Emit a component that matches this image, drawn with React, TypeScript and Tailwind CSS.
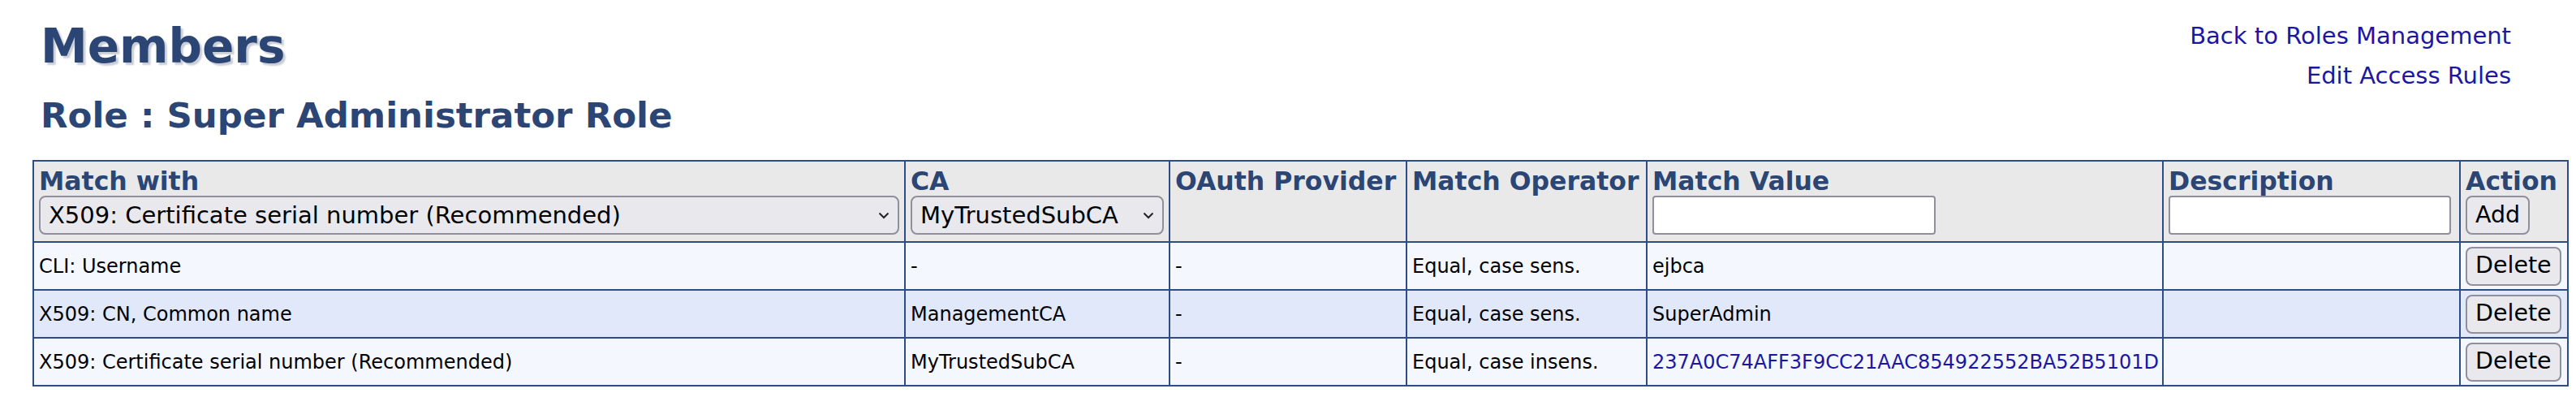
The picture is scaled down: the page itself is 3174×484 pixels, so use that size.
const rows = [
  { match: "CLI: Username", ca: "-", oauth: "-", op: "Equal, case sens.", value: "ejbca", link: false },
  { match: "X509: CN, Common name", ca: "ManagementCA", oauth: "-", op: "Equal, case sens.", value: "SuperAdmin", link: false },
  {
    match: "X509: Certificate serial number (Recommended)",
    ca: "MyTrustedSubCA",
    oauth: "-",
    op: "Equal, case insens.",
    value: "237A0C74AFF3F9CC21AAC854922552BA52B5101D",
    link: true,
  },
];

function Select({ value }: { value: string }) {
  return (
    <div className="relative w-full">
      <select
        defaultValue={value}
        className="w-full h-[48px] appearance-none bg-[#e9e9ed] border-2 border-[#8f8f9d] rounded-[8px] pl-[10px] pr-[36px] text-[29px] font-normal text-black font-['DejaVu_Sans',sans-serif]"
      >
        <option>{value}</option>
      </select>
      <svg
        className="absolute right-[12px] top-[20px] w-[14px] h-[9px] pointer-events-none"
        viewBox="0 0 14 9"
        fill="none"
        stroke="#222"
        strokeWidth="2"
      >
        <polyline points="1.5,1.5 7,7 12.5,1.5" />
      </svg>
    </div>
  );
}

function Button({ label }: { label: string }) {
  return (
    <button className="h-[48px] px-[10px] bg-[#e9e9ed] border-2 border-[#8f8f9d] rounded-[8px] text-[28.5px] font-normal leading-none text-black">
      {label}
    </button>
  );
}

export default function App() {
  const th = "border-2 border-[#2f4d85] align-top px-[6px] pt-[6px] text-left";
  const td = "border-2 border-[#2f4d85] px-[6px] align-middle text-[24px] text-black whitespace-nowrap";

  return (
    <div className="w-[3174px] h-[484px] bg-white font-['DejaVu_Sans',sans-serif] overflow-hidden">
      <div className="flex justify-between">
        <div className="pl-[50px] pt-[28px] text-[#2b4574] font-bold">
          <h1 className="text-[58px] leading-[58px] [text-shadow:3px_3px_2px_#c9cdd6]">Members</h1>
          <h2 className="mt-[34px] text-[43.5px] leading-[44px]">Role : Super Administrator Role</h2>
        </div>
        <div className="pr-[80px] pt-[20px] flex flex-col items-end text-[29px] leading-[49px] text-[#1c17a3]">
          <a href="#">Back to Roles Management</a>
          <a href="#">Edit Access Rules</a>
        </div>
      </div>

      <table className="ml-[40px] mt-[33px] w-[3125px] table-fixed border-collapse border-2 border-[#2f4d85]">
        <colgroup>
          <col className="w-[1074px]" />
          <col className="w-[326px]" />
          <col className="w-[292px]" />
          <col className="w-[296px]" />
          <col className="w-[636px]" />
          <col className="w-[366px]" />
          <col className="w-[133px]" />
        </colgroup>
        <thead>
          <tr className="h-[100px] bg-[#e9e9e9] text-[#2b4574] text-[31.5px] leading-[36px] font-bold">
            <th className={th}>
              <div>Match with</div>
              <Select value="X509: Certificate serial number (Recommended)" />
            </th>
            <th className={th}>
              <div>CA</div>
              <Select value="MyTrustedSubCA" />
            </th>
            <th className={th + " whitespace-nowrap"}>OAuth Provider</th>
            <th className={th + " whitespace-nowrap"}>Match Operator</th>
            <th className={th}>
              <div>Match Value</div>
              <input className="w-[349px] h-[48px] bg-white border-2 border-[#8f8f9d] rounded-[4px]" />
            </th>
            <th className={th}>
              <div>Description</div>
              <input className="w-[348px] h-[48px] bg-white border-2 border-[#8f8f9d] rounded-[4px]" />
            </th>
            <th className={th}>
              <div>Action</div>
              <Button label="Add" />
            </th>
          </tr>
        </thead>
        <tbody>
          {rows.map((r, i) => (
            <tr key={r.match} className={"h-[59px] " + (i % 2 === 1 ? "bg-[#e1e8fa]" : "bg-[#f4f7fe]")}>
              <td className={td}>{r.match}</td>
              <td className={td}>{r.ca}</td>
              <td className={td}>{r.oauth}</td>
              <td className={td}>{r.op}</td>
              <td className={td}>
                {r.link ? <a href="#" className="text-[#1c17a3]">{r.value}</a> : r.value}
              </td>
              <td className={td}></td>
              <td className={td}>
                <Button label="Delete" />
              </td>
            </tr>
          ))}
        </tbody>
      </table>
    </div>
  );
}
